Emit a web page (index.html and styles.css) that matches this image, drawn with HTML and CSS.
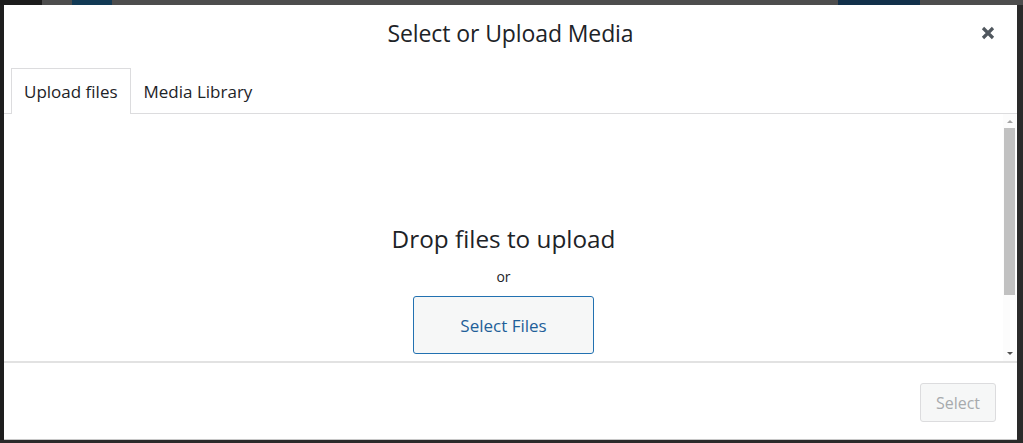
FILE: index.html
```html
<!DOCTYPE html>
<html lang="en">
<head>
<meta charset="utf-8">
<title>Select or Upload Media</title>
<link rel="stylesheet" href="styles.css">
</head>
<body>
<div class="screen">
  <div class="editor-strip">
    <span class="strip-dark s1"></span>
    <span class="strip-blue s2"></span>
    <span class="strip-gap s3"></span>
    <span class="strip-blue s4"></span>
    <span class="strip-gap s5"></span>
  </div>
  <div class="stage">
    <div class="side-left"></div>
    <div class="modal">
      <header class="modal-head">
        <span class="head-spacer"></span>
        <h1 class="modal-title">Select or Upload Media</h1>
        <button class="modal-close" aria-label="Close">
          <svg width="16" height="16" viewBox="0 0 16 16"><path d="M3 3 L13 13 M13 3 L3 13" stroke="#50575e" stroke-width="3.2" stroke-linecap="butt"/></svg>
        </button>
      </header>
      <nav class="tabs">
        <span class="tab active">Upload files</span>
        <span class="tab">Media Library</span>
      </nav>
      <section class="content">
        <div class="uploader">
          <p class="drop-title">Drop files to upload</p>
          <p class="drop-or">or</p>
          <button class="browse-btn">Select Files</button>
        </div>
        <div class="scrollbar">
          <span class="arrow up"></span>
          <span class="thumb"></span>
          <span class="track"></span>
          <span class="arrow down"></span>
        </div>
      </section>
      <footer class="toolbar">
        <button class="select-btn" disabled>Select</button>
      </footer>
    </div>
    <div class="side-right"></div>
  </div>
  <div class="bottom-strip"></div>
</div>
</body>
</html>
```

FILE: styles.css
```css
* { box-sizing: border-box; }
html, body { margin: 0; padding: 0; }
body {
  width: 1023px;
  height: 443px;
  overflow: hidden;
  background: #4a4a4a;
  font-family: "Open Sans", "Noto Sans", sans-serif;
  color: #1d2327;
}
.screen { display: flex; flex-direction: column; height: 443px; }

.editor-strip { height: 5px; display: flex; background: #4d4d4d; }
.strip-dark { width: 42px; background: #1c1c1c; }
.s2 { width: 40px; margin-left: 30px; background: #123a55; }
.s3 { flex: 1; }
.s4 { width: 82px; background: #12304a; }
.s5 { width: 103px; }

.stage { display: flex; height: 435px; }
.side-left { width: 4px; background: #1e1e1e; }
.side-right { width: 6px; background: #2a2a2a; }
.bottom-strip { height: 3px; background: #2a2a2a; }

.modal {
  width: 1013px;
  height: 435px;
  background: #fff;
  display: flex;
  flex-direction: column;
  border-bottom: 1px solid #c8c8c8;
}

.modal-head {
  height: 56px;
  display: grid;
  grid-template-columns: 1fr auto 1fr;
  align-items: center;
}
.modal-title {
  margin: 0;
  font-size: 23px;
  font-weight: 400;
  color: #1d2327;
  letter-spacing: -0.1px;
}
.modal-close {
  justify-self: end;
  margin-right: 20px;
  width: 18px;
  height: 18px;
  padding: 0;
  border: 0;
  background: none;
  display: flex;
  align-items: center;
  justify-content: center;
}

.tabs {
  margin-top: 7px;
  padding-left: 7px;
  display: flex;
  border-bottom: 1px solid #dcdcde;
  height: 46px;
}
.tab {
  height: 46px;
  padding: 0 12px;
  display: flex;
  align-items: center;
  font-size: 17px;
  color: #1d2327;
  border: 1px solid transparent;
  border-bottom: 0;
  margin-bottom: -1px;
}
.tab.active {
  border-color: #dcdcde;
  background: #fff;
}

.content {
  height: 247px;
  display: flex;
  overflow: hidden;
}
.uploader {
  flex: 1;
  display: flex;
  flex-direction: column;
  align-items: center;
  padding-top: 109px;
}
.drop-title {
  margin: 0;
  font-size: 24.3px;
  line-height: 32px;
  color: #1d2327;
}
.drop-or {
  margin: 12px 0 0;
  font-size: 14px;
  line-height: 20px;
  color: #1d2327;
}
.browse-btn {
  margin-top: 9px;
  flex: none;
  width: 181px;
  height: 58px;
  border: 1px solid #2271b1;
  border-radius: 3px;
  background: #f6f7f7;
  color: #1f5f99;
  font-family: inherit;
  font-size: 17px;
}

.scrollbar {
  width: 13px;
  margin-right: 1px;
  display: flex;
  flex-direction: column;
  align-items: center;
  background: #fcfcfc;
}
.arrow { width: 0; height: 0; border-left: 3px solid transparent; border-right: 3px solid transparent; }
.arrow.up { margin: 6px 0 5px; border-bottom: 3px solid #a3a3a3; }
.arrow.down { margin: 5px 0 6px; border-top: 3px solid #505050; }
.thumb { width: 11px; height: 167px; background: #c1c1c1; }
.track { flex: 1; }

.toolbar {
  flex: 1;
  border-top: 2px solid #e2e2e2;
  display: flex;
  justify-content: flex-end;
  align-items: flex-start;
  padding: 20px 21px 0 0;
}
.select-btn {
  width: 76px;
  height: 39px;
  border: 1px solid #dcdcde;
  border-radius: 3px;
  background: #f6f7f7;
  color: #a7aaad;
  font-family: inherit;
  font-size: 16px;
}
```
